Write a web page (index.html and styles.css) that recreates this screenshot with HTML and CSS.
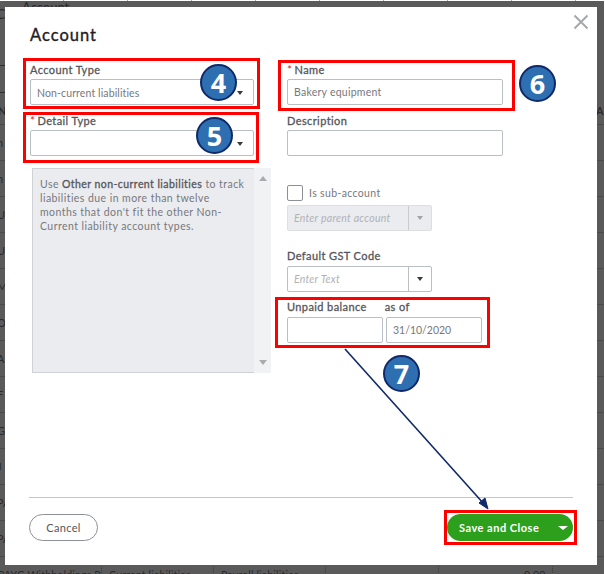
FILE: index.html
```html
<!DOCTYPE html>
<html lang="en">
<head>
<meta charset="utf-8">
<title>Account</title>
<link rel="stylesheet" href="styles.css">
</head>
<body>
<div class="screen">
  <div class="backdrop" aria-hidden="true">
    <span class="bg-text bg-title">Account</span>
    <span class="bg-text bg-c">C</span>
    <span class="bg-rule bg-rule-a"></span>
    <span class="bg-rule bg-rule-b"></span>
    <span class="bg-text bg-na">N</span>
    <span class="bg-text bg-ai">AI</span>
    <div class="bg-rows">
      <span>n</span><span>n</span><span>U</span><span>U</span><span>M</span><span>O</span>
      <span>A</span><span>F</span><span>G</span><span>J</span><span>PA</span><span>PA</span>
    </div>
    <div class="bg-last">
      <span class="bg-cell bg-cell-1">PAYG Withholdings Payable</span>
      <span class="bg-cell bg-cell-2">Current liabilities</span>
      <span class="bg-cell bg-cell-3">Payroll liabilities</span>
      <span class="bg-cell bg-cell-4"></span>
      <span class="bg-cell bg-cell-5">0.00</span>
    </div>
  </div>

  <main class="modal">
    <button class="close" aria-label="Close">
      <svg width="16" height="16" viewBox="0 0 16 16"><path d="M1.5 1.5 14.5 14.5M14.5 1.5 1.5 14.5" stroke="#a6a8ab" stroke-width="2" fill="none"/></svg>
    </button>
    <h1 class="title">Account</h1>

    <div class="columns">
      <section class="col col-left">
        <div class="field">
          <label class="label">Account Type</label>
          <div class="input select"><span>Non-current liabilities</span><i class="caret"></i></div>
        </div>
        <div class="field">
          <label class="label"><b class="req">*</b>Detail Type</label>
          <div class="input select"><span></span><i class="caret"></i></div>
        </div>
        <div class="help">
          <p class="help-text">Use <strong>Other non-current liabilities</strong> to track liabilities due in more than twelve months that don't fit the other Non-Current liability account types.</p>
          <div class="scrollbar"><i class="arrow-up"></i><i class="arrow-down"></i></div>
        </div>
      </section>

      <section class="col col-right">
        <div class="field">
          <label class="label"><b class="req">*</b>Name</label>
          <div class="input wide">Bakery equipment</div>
        </div>
        <div class="field">
          <label class="label">Description</label>
          <div class="input wide"></div>
        </div>
        <div class="check-row"><span class="checkbox"></span><span class="check-label">Is sub-account</span></div>
        <div class="combo combo-disabled">
          <span class="combo-text">Enter parent account</span>
          <span class="combo-btn"><i class="caret caret-muted"></i></span>
        </div>
        <label class="label label-gst">Default GST Code</label>
        <div class="combo">
          <span class="combo-text">Enter Text</span>
          <span class="combo-btn"><i class="caret"></i></span>
        </div>
        <div class="balance-labels"><span class="label">Unpaid balance</span><span class="label">as of</span></div>
        <div class="balance-inputs">
          <div class="input small"></div>
          <div class="input small date">31/10/2020</div>
        </div>
      </section>
    </div>

    <footer class="footer">
      <button class="btn-cancel">Cancel</button>
      <button class="btn-save"><span>Save and Close</span><i class="caret caret-white"></i></button>
    </footer>
  </main>

  <div class="mark mark-4"></div>
  <div class="mark mark-5"></div>
  <div class="mark mark-6"></div>
  <div class="mark mark-7"></div>
  <div class="mark mark-save"></div>
  <span class="badge badge-4">4</span>
  <span class="badge badge-5">5</span>
  <span class="badge badge-6">6</span>
  <span class="badge badge-7">7</span>
  <svg class="arrow" width="605" height="574" viewBox="0 0 605 574" aria-hidden="true">
    <path d="M345 349 484 504" stroke="#10296b" stroke-width="1.6" fill="none"/>
    <path d="M488 509 479 503 485 498Z" fill="#10296b" stroke="#10296b"/>
  </svg>
</div>
</body>
</html>
```

FILE: styles.css
```css
* { box-sizing: border-box; }
html, body { margin: 0; padding: 0; }
body { font-family: "Lato", "Liberation Sans", sans-serif; color: #393a3d; }

.screen {
  position: relative;
  width: 605px;
  height: 574px;
  overflow: hidden;
  background: repeating-linear-gradient(90deg, #fff 0 63px, #a8a8a8 63px 64px);
  padding: 7px 8px 9px 5px;
}

/* dimmed page behind the dialog */
.backdrop { position: absolute; inset: 1px 1px 0 0; background: #5a5a5b; overflow: hidden; }
.bg-text { position: absolute; font-size: 11px; color: #2b2b2b; white-space: nowrap; line-height: 12px; }
.bg-title { left: 22px; top: 0; font-size: 13px; }
.bg-c { left: -4px; top: 7px; font-size: 14px; }
.bg-rule { position: absolute; left: 0; width: 5px; height: 1px; background: #2f2f2f; }
.bg-rule-a { top: 64px; }
.bg-rule-b { top: 91px; }
.bg-na { left: -2px; top: 104px; font-weight: 700; }
.bg-ai { left: 596px; top: 104px; font-weight: 700; }
.bg-rows { position: absolute; left: 0; right: 0; top: 123px; display: flex; flex-direction: column; }
.bg-rows span {
  height: 36px;
  border-top: 1px solid #4a4a4b;
  padding-top: 12px;
  font-size: 11px;
  line-height: 12px;
  color: #2b2b2b;
  text-indent: -3px;
}
.bg-last { position: absolute; left: 0; top: 555px; right: 0; height: 18px; display: flex; border-top: 1px solid #4a4a4b; }
.bg-cell {
  height: 18px;
  font-size: 10.5px;
  line-height: 12px;
  padding-top: 12px;
  color: #2b2b2b;
  white-space: nowrap;
  overflow: hidden;
  border-right: 1px dotted #3c3c3c;
  letter-spacing: 0.2px;
}
.bg-cell-1 { width: 102px; text-indent: -2px; }
.bg-cell-2 { width: 112px; padding-left: 7px; }
.bg-cell-3 { width: 112px; padding-left: 7px; }
.bg-cell-4 { width: 113px; }
.bg-cell-5 { width: 114px; padding-left: 85px; }

/* dialog */
.modal {
  position: relative;
  width: 592px;
  height: 558px;
  background: #fff;
  padding: 20px 24px 24px 24px;
  display: flex;
  flex-direction: column;
}
.close {
  position: absolute;
  top: 7px;
  right: 8px;
  width: 16px;
  height: 16px;
  padding: 0;
  border: 0;
  background: none;
  display: block;
}
.close svg { display: block; }
.title {
  margin: 0 0 0 1px;
  font-size: 16.5px;
  line-height: 16px;
  font-weight: 400;
  letter-spacing: 1px;
  color: #1f2024;
  -webkit-text-stroke: 0.35px #1f2024;
}

.columns { display: flex; margin-top: 20px; flex: 1; }
.col-left { width: 258px; padding-left: 1px; }
.col-right { width: 216px; }

.field { display: flex; flex-direction: column; gap: 3px; margin-bottom: 9px; height: 42px; }
.label {
  display: block;
  font-size: 11px;
  line-height: 13px;
  font-weight: 400;
  color: #55565a;
  letter-spacing: 0.4px;
  white-space: nowrap;
  -webkit-text-stroke: 0.3px #55565a;
}
.req { color: #d52b1e; margin-right: 2px; font-weight: 400; font-size: 12px; -webkit-text-stroke: 0; }

.input {
  height: 26px;
  border: 1px solid #babec5;
  border-radius: 2px;
  background: #fff;
  font-size: 10.5px;
  line-height: 25px;
  color: #77787d;
  padding: 0 6px;
  letter-spacing: 0.25px;
}
.select { display: flex; align-items: center; justify-content: space-between; width: 224px; letter-spacing: 0.12px; padding-top: 2px; }
.wide { width: 216px; }
.small { width: 96px; height: 26px; }
.date { letter-spacing: 0; }

.caret {
  display: block;
  width: 0;
  height: 0;
  border-left: 3.5px solid transparent;
  border-right: 3.5px solid transparent;
  border-top: 4px solid #393a3d;
}
.select .caret { margin-right: 4px; }
.caret-muted { border-top-color: #a0a3a8; }
.caret-white { border-left-width: 5px; border-right-width: 5px; border-top: 4px solid #fff; }

.help {
  display: flex;
  width: 239px;
  height: 205px;
  margin: 12px 0 0 2px;
  background: #ebecf0;
  border-left: 1px solid #cfd1d4;
  border-top: 1px solid #cfd1d4;
  border-bottom: 1px solid #cfd1d4;
}
.help-text {
  width: 215px;
  margin: 0 7px 0 0;
  padding: 8px 0 0 7px;
  font-size: 10.5px;
  line-height: 14px;
  color: #77787d;
  letter-spacing: 0.44px;
}
.help-text strong { color: #55565a; font-weight: 400; -webkit-text-stroke: 0.3px #55565a; }
.scrollbar {
  width: 17px;
  margin: -1px 0;
  background: #f1f2f4;
  display: flex;
  flex-direction: column;
  justify-content: space-between;
  align-items: center;
  padding: 8px 0;
}
.arrow-up, .arrow-down { display: block; width: 0; height: 0; border-left: 4px solid transparent; border-right: 4px solid transparent; }
.arrow-up { border-bottom: 5px solid #a9abae; }
.arrow-down { border-top: 5px solid #a9abae; }

.check-row { display: flex; align-items: center; gap: 6px; height: 16px; margin-top: 29px; }
.checkbox { width: 16px; height: 16px; border: 1px solid #8d9096; border-radius: 2px; }
.check-label { font-size: 10.5px; color: #77787d; letter-spacing: 0.35px; }

.combo {
  display: flex;
  width: 145px;
  height: 26px;
  margin-top: 4px;
  border: 1px solid #babec5;
  border-radius: 2px;
  background: #fff;
}
.combo-text {
  flex: 1;
  font-size: 10.5px;
  line-height: 24px;
  font-style: italic;
  color: #b0b2b6;
  padding-left: 6px;
  letter-spacing: 0.25px;
}
.combo-btn { width: 23px; border-left: 1px solid #babec5; display: flex; align-items: center; justify-content: center; }
.combo-disabled { background: #ebecf0; border-color: #dcdee1; }
.combo-disabled .combo-btn { border-left-color: #c9cbd0; }

.label-gst { margin-top: 18px; }
.balance-labels { display: flex; gap: 18px; margin-top: 8px; }
.balance-inputs { display: flex; gap: 3px; margin-top: 4px; }

.footer {
  display: flex;
  justify-content: space-between;
  align-items: center;
  border-top: 1px solid #c4c5c8;
  padding-top: 16px;
  height: 44px;
}
.btn-cancel {
  width: 69px;
  height: 27px;
  border: 1px solid #8d9096;
  border-radius: 14px;
  background: #fff;
  font: 400 11px "Lato", sans-serif;
  letter-spacing: 0.3px;
  color: #55565a;
  padding: 0;
}
.btn-save {
  width: 126px;
  height: 27px;
  border: 0;
  border-radius: 14px;
  background: #2ca01c;
  color: #fff;
  font: 700 11px "Lato", sans-serif;
  letter-spacing: 0.5px;
  padding: 0 5px 0 12px;
  display: flex;
  align-items: center;
  justify-content: space-between;
}

/* annotations laid over the screenshot */
.mark { position: absolute; border: 3px solid #f00; }
.mark-4 { left: 23px; top: 58px; width: 237px; height: 51px; }
.mark-5 { left: 23px; top: 112px; width: 236px; height: 51px; }
.mark-6 { left: 278px; top: 60px; width: 237px; height: 51px; }
.mark-7 { left: 275px; top: 297px; width: 215px; height: 51px; }
.mark-save { left: 444px; top: 510px; width: 133px; height: 35px; }

.badge {
  position: absolute;
  width: 37px;
  height: 37px;
  border-radius: 50%;
  border: 2px solid #10296b;
  background: #2e6fb2;
  color: #fff;
  font: 700 27px/33px "Open Sans", sans-serif;
  text-align: center;
}
.badge-4 { left: 200px; top: 64px; }
.badge-5 { left: 196px; top: 117px; }
.badge-6 { left: 519px; top: 65px; }
.badge-7 { left: 383px; top: 355px; }
.arrow { position: absolute; left: 0; top: 0; pointer-events: none; }
```
